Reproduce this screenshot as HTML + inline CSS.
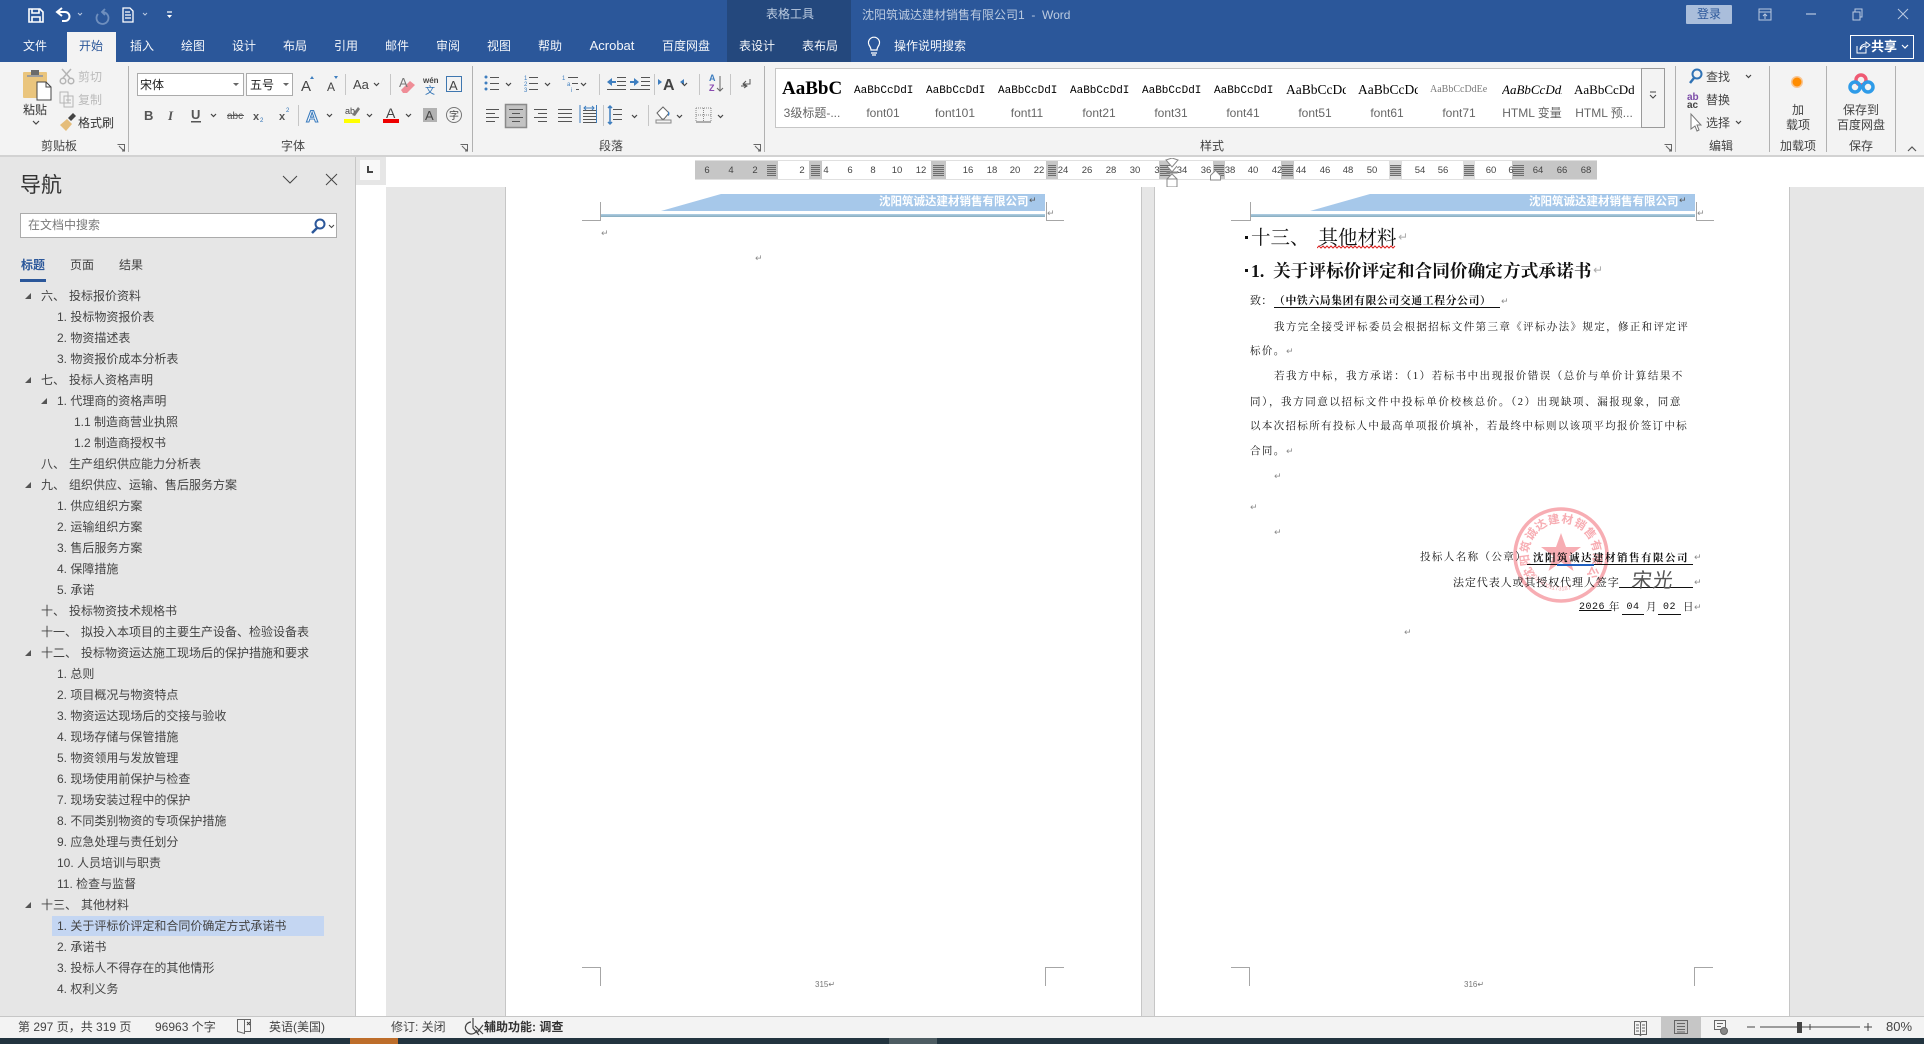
<!DOCTYPE html>
<html lang="zh"><head><meta charset="utf-8"><title>Word</title>
<style>
html,body{margin:0;padding:0;background:#fff}
body{width:1924px;height:1044px;position:relative;overflow:hidden;font:12px/12px "Liberation Sans","Noto Sans CJK SC",sans-serif;color:#444}
.a,.t,.c,.d,.m{position:absolute}
.t,.c,.d,.m{white-space:nowrap}
.c{transform:translateX(-50%)}
.tab{position:absolute;top:40px;color:#f4f6fa;transform:translateX(-50%);white-space:nowrap}
.g{position:absolute;top:140px;color:#444;transform:translateX(-50%);white-space:nowrap}
.sep{position:absolute;top:66px;height:86px;width:1px;background:#b1b1b1}
.bx{position:absolute;background:#fff;border:1px solid #ababab;box-sizing:border-box}
.st{position:absolute;top:81px;width:60px;height:20px;overflow:hidden;white-space:nowrap;color:#000;line-height:18px}
.sl{position:absolute;top:107px;color:#666;transform:translateX(-50%);white-space:nowrap}
.rb{position:absolute;top:161px;height:18px;background:#c6c6c6}
.hh{position:absolute;top:165px;height:11px;background:repeating-linear-gradient(0deg,#6d6d6d 0 1px,#bdbdbd 1px 2px)}
.rn{position:absolute;top:166px;font-size:9.5px;line-height:9px;color:#444;transform:translateX(-50%)}
#nav div{height:21px;line-height:21px;white-space:nowrap;color:#444;position:relative}
#nav .l1{padding-left:41px}
#nav .l2{padding-left:57px}
#nav .l3{padding-left:74px}
#nav .l1 b{font-weight:normal;display:inline-block;width:28px}
#nav .l1 b.w{width:40px}
#nav i{position:absolute;top:7px;width:0;height:0;border-bottom:6px solid #555;border-left:6px solid transparent}
.d{font-family:"Liberation Serif","Noto Serif CJK SC",serif;color:#111;font-size:10.5px;line-height:12px;letter-spacing:1.36px}
.m{font-family:"DejaVu Sans",sans-serif;font-size:9px;line-height:10px;color:#8a8a8a;letter-spacing:0}
.pg{position:absolute;top:187px;height:829px;background:#fff;border-left:1px solid #c6c6c6;border-right:1px solid #c6c6c6;box-sizing:content-box}
.hdt{position:absolute;top:196px;color:#fff;font-weight:bold;font-size:11.5px;line-height:12px;white-space:nowrap;font-family:"Liberation Serif","Noto Sans CJK SC",sans-serif}
.fn{position:absolute;top:980px;font-size:8px;line-height:9px;color:#777}
</style></head><body>

<!-- title bar -->
<div class="a" style="left:0;top:0;width:1924px;height:62px;background:#2b579a"></div>
<div class="a" style="left:727px;top:0;width:124px;height:62px;background:#24487d"></div>
<div class="a" style="left:67px;top:32px;width:49px;height:30px;background:#f3f3f3"></div>
<div class="tab" style="left:35px">文件</div>
<div class="tab" style="left:91px;color:#2b579a">开始</div>
<div class="tab" style="left:142px">插入</div>
<div class="tab" style="left:193px">绘图</div>
<div class="tab" style="left:244px">设计</div>
<div class="tab" style="left:295px">布局</div>
<div class="tab" style="left:346px">引用</div>
<div class="tab" style="left:397px">邮件</div>
<div class="tab" style="left:448px">审阅</div>
<div class="tab" style="left:499px">视图</div>
<div class="tab" style="left:550px">帮助</div>
<div class="tab" style="left:612px;font-size:13px">Acrobat</div>
<div class="tab" style="left:686px">百度网盘</div>
<div class="tab" style="left:757px">表设计</div>
<div class="tab" style="left:820px">表布局</div>
<div class="tab" style="left:930px">操作说明搜索</div>
<div class="c" style="left:790px;top:8px;color:#bccbe0">表格工具</div>
<div class="t" style="left:862px;top:9px;color:#bccbe0">沈阳筑诚达建材销售有限公司1 &nbsp;-&nbsp; Word</div>
<div class="a" style="left:1686px;top:5px;width:46px;height:19px;background:#aabedb;border-radius:1px;color:#2b579a;text-align:center;line-height:19px">登录</div>
<div class="a" style="left:1850px;top:35px;width:64px;height:24px;box-sizing:border-box;border:1px solid #fff;color:#fff;font-weight:bold;font-size:13px;line-height:22px;padding-left:20px">共享</div>

<!-- ribbon -->
<div class="a" style="left:0;top:62px;width:1924px;height:93px;background:#f3f3f3"></div>
<div class="a" style="left:0;top:155px;width:1924px;height:2px;background:#d2d2d2"></div>
<div class="sep" style="left:128px"></div><div class="sep" style="left:472px"></div><div class="sep" style="left:764px"></div><div class="sep" style="left:1675px"></div><div class="sep" style="left:1769px"></div><div class="sep" style="left:1826px"></div><div class="sep" style="left:1895px"></div>
<div class="c" style="left:35px;top:104px;color:#333">粘贴</div>
<div class="t" style="left:78px;top:71px;color:#bbb">剪切</div>
<div class="t" style="left:78px;top:94px;color:#bbb">复制</div>
<div class="t" style="left:78px;top:117px;color:#333">格式刷</div>
<div class="g" style="left:59px">剪贴板</div><div class="g" style="left:293px">字体</div><div class="g" style="left:611px">段落</div><div class="g" style="left:1212px">样式</div><div class="g" style="left:1721px">编辑</div><div class="g" style="left:1798px">加载项</div><div class="g" style="left:1861px">保存</div>
<div class="bx" style="left:137px;top:73px;width:107px;height:23px;color:#222;padding:5px 0 0 2px">宋体</div>
<div class="bx" style="left:246px;top:73px;width:47px;height:23px;color:#222;padding:5px 0 0 3px">五号</div>
<div class="t" style="left:1706px;top:71px">查找</div><div class="t" style="left:1706px;top:94px">替换</div><div class="t" style="left:1706px;top:117px">选择</div>
<div class="c" style="left:1798px;top:104px">加</div><div class="c" style="left:1798px;top:119px">载项</div>
<div class="c" style="left:1861px;top:104px">保存到</div><div class="c" style="left:1861px;top:119px">百度网盘</div>

<!-- style gallery -->
<div class="a" style="left:775px;top:68px;width:890px;height:60px;background:#fff;box-sizing:border-box;border:1px solid #c6c6c6"></div>
<div class="a" style="left:1641px;top:68px;width:24px;height:60px;box-sizing:border-box;border:1px solid #9a9a9a;background:#f3f3f3"></div>
<div class="st" style="left:782px;top:80px;font:bold 19px/18px 'Liberation Serif',serif">AaBbC</div>
<div class="st" style="left:854px;top:82px;font:11px/18px 'Liberation Mono',monospace">AaBbCcDdI</div>
<div class="st" style="left:926px;top:82px;font:11px/18px 'Liberation Mono',monospace">AaBbCcDdI</div>
<div class="st" style="left:998px;top:82px;font:11px/18px 'Liberation Mono',monospace">AaBbCcDdI</div>
<div class="st" style="left:1070px;top:82px;font:11px/18px 'Liberation Mono',monospace">AaBbCcDdI</div>
<div class="st" style="left:1142px;top:82px;font:11px/18px 'Liberation Mono',monospace">AaBbCcDdI</div>
<div class="st" style="left:1214px;top:82px;font:11px/18px 'Liberation Mono',monospace">AaBbCcDdI</div>
<div class="st" style="left:1286px;font:13.5px/18px 'Liberation Serif',serif">AaBbCcDdE</div>
<div class="st" style="left:1358px;font:13.5px/18px 'Liberation Serif',serif">AaBbCcDdE</div>
<div class="st" style="left:1430px;font:10px/18px 'Liberation Serif',serif;color:#7a7a7a">AaBbCcDdEe</div>
<div class="st" style="left:1502px;font:italic 13px/18px 'Liberation Serif',serif">AaBbCcDdE</div>
<div class="st" style="left:1574px;font:13px/18px 'Liberation Serif',serif">AaBbCcDdE</div>
<div class="sl" style="left:812px">3级标题-...</div><div class="sl" style="left:883px">font01</div><div class="sl" style="left:955px">font101</div><div class="sl" style="left:1027px">font11</div><div class="sl" style="left:1099px">font21</div><div class="sl" style="left:1171px">font31</div><div class="sl" style="left:1243px">font41</div><div class="sl" style="left:1315px">font51</div><div class="sl" style="left:1387px">font61</div><div class="sl" style="left:1459px">font71</div><div class="sl" style="left:1532px">HTML 变量</div><div class="sl" style="left:1604px">HTML 预...</div>

<!-- ribbon & title icons -->
<svg class="a" style="left:0;top:0" width="1924" height="156" font-family="Liberation Sans,sans-serif">
<g fill="none" stroke="#fff" stroke-width="1.6">
 <path d="M29 9h11l3 3v10h-14z"/><path d="M32 9v4h7V9M32 22v-5h8v5"/>
 <path d="M62 8l-5 4 5 4M57 12h8a4.500 4.500 0 0 1 0 9h-3" stroke-width="2"/>
 <path d="M123 8h7l3 3v11h-10zM125 12h5M125 15h6M125 18h6" stroke-width="1.3"/>
 <path d="M167 12h5" stroke-width="1.200"/>
 <path d="M78 13l2 2 2-2M143 13l2 2 2-2" stroke="#b9c8e0" stroke-width="1"/>
</g>
<path d="M167 15h5l-2.500 3z" fill="#fff"/>
<path d="M105 9l-3 3 3 3M102 12a6 6 0 1 1-4 2" fill="none" stroke="#6f8fbe" stroke-width="1.800"/>
<!-- bulb -->
<path transform="translate(0,7)" d="M869 38a5.500 5.500 0 1 1 10 0c-1 1.500-2 3-2 5h-6c0-2-1-3.500-2-5zM871 46h6M872 48h4" fill="none" stroke="#fff" stroke-width="1.200"/>
<!-- window buttons -->
<g fill="none" stroke="#b9c8e0" stroke-width="1">
 <path d="M1759 9h12v11h-12zM1759 12h12M1765 19v-5M1763 16l2-2 2 2"/>
 <path d="M1806 14h10" stroke="#d5dfee"/>
 <path d="M1853 12h7v8h-7zM1855 12V9h7v8h-2"/>
 <path d="M1898 9l10 10M1908 9l-10 10"/>
 <path d="M1857 46v7h9v-4M1860 50c0-3 2-6 6-6v-2l4 3-4 3v-2c-3 0-5 2-6 4z" stroke="#fff"/>
 <path d="M1902 45l3 3 3-3" stroke="#fff" stroke-width="1.200"/>
</g>
<!-- clipboard -->
<rect x="23" y="72" width="24" height="26" fill="#eac57d" rx="1"/><rect x="31" y="70" width="8" height="5" fill="#6b6b6b"/><rect x="27" y="75" width="16" height="2" fill="#9d9d9d"/>
<path d="M37 82h9l5 5v13H37z" fill="#fff" stroke="#444"/><path d="M46 82v5h5" fill="none" stroke="#444"/>
<path d="M33 121l3 3 3-3" fill="none" stroke="#444" stroke-width="1.200"/>
<g fill="none" stroke="#b5b5b5" stroke-width="1.500"><path d="M62 69l8 9M71 69l-8 9"/><circle cx="63" cy="81" r="2.800"/><circle cx="71" cy="81" r="2.800"/><path d="M60 92h8v11h-8zM64 96h9v11h-9zM66 100h5M66 103h5" stroke-width="1"/></g>
<path d="M60 125l7-6 5 5-6 7z" fill="#e5bd7a"/><path d="M68 118l5-5 3 3-5 5z" fill="#444"/>
<!-- combos -->
<path d="M233 83h6l-3 3zM283 83h6l-3 3" fill="#666"/>
<!-- font row1 -->
<g fill="#444" font-size="15"><text x="301" y="91">A</text><text x="327" y="91" font-size="12">A</text><text x="353" y="89" font-size="13">Aa</text></g>
<path d="M310 79l2-3 2 3zM334 76h4l-2 3z" fill="#3e7ebf"/>
<path d="M374 83l2.500 2.500 2.500-2.500" fill="none" stroke="#444" stroke-width="1.200"/>
<rect x="345" y="74" width="1" height="21" fill="#c6c6c6"/><rect x="390" y="74" width="1" height="21" fill="#c6c6c6"/>
<path d="M401 90l9-9 5 4-8 8h-4z" fill="#ef8d97"/><text x="399" y="87" font-size="13" fill="#777">A</text>
<text x="423" y="83" font-size="8" fill="#444" font-weight="bold">wén</text><text x="425" y="94" font-size="10" fill="#2f72b5" font-family="Noto Sans CJK SC">文</text>
<rect x="446.500" y="76.500" width="15" height="15" fill="none" stroke="#3f77b0"/><text x="449" y="90" font-size="13" fill="#444">A</text>
<!-- font row 2 -->
<g fill="#555" font-size="13" font-weight="bold"><text x="144" y="120">B</text><text x="168" y="120" font-style="italic" font-family="Liberation Serif">I</text><text x="191" y="119">U</text><rect x="191" y="121" width="10" height="1.500"/><text x="227" y="119" font-size="10" font-weight="normal">abc</text><rect x="227" y="115" width="17" height="1"/><text x="253" y="120" font-size="11">x</text><text x="279" y="120" font-size="11">x</text></g>
<text x="260" y="122" font-size="6" fill="#2f72b5">2</text><text x="286" y="112" font-size="6" fill="#2f72b5">2</text>
<path d="M211 114l2.500 2.500 2.500-2.500M327 114l2.500 2.500 2.500-2.500M367 114l2.500 2.500 2.500-2.500M406 114l2.500 2.500 2.500-2.500" fill="none" stroke="#444" stroke-width="1.200"/>
<rect x="298" y="105" width="1" height="21" fill="#c6c6c6"/>
<text x="306" y="122" font-size="17" fill="#fff" stroke="#3e7ebf" stroke-width="1.100" font-weight="bold">A</text>
<text x="345" y="114" font-size="9" fill="#444">ab</text><path d="M352 115l6-8 2 2-5 7z" fill="#777"/><rect x="344" y="119" width="16" height="4" fill="#ff0"/>
<text x="386" y="118" font-size="14" fill="#444">A</text><rect x="383" y="119" width="16" height="4" fill="#e00"/>
<rect x="423" y="108" width="14" height="14" fill="#b2b2b2"/><text x="425" y="120" font-size="13" fill="#444">A</text>
<circle cx="454" cy="115" r="7.500" fill="none" stroke="#777"/><text x="449" y="119" font-size="10" fill="#444" font-family="Noto Sans CJK SC">字</text>
<!-- paragraph -->
<g fill="#3e7ebf"><circle cx="486" cy="77" r="1.500"/><circle cx="486" cy="83" r="1.500"/><circle cx="486" cy="89" r="1.500"/>
<text x="524" y="80" font-size="6">1</text><text x="524" y="86" font-size="6">2</text><text x="524" y="92" font-size="6">3</text>
<text x="562" y="80" font-size="6">1</text><text x="567" y="86" font-size="6">a</text><text x="571" y="92" font-size="6">i</text>
<path d="M607 82l5-4v3h4v2h-4v3zM630 81h4v-3l5 4-5 4v-3h-4z"/>
<path d="M662 82l-4-3v6zM680 82l4-3v6z"/></g>
<g fill="none" stroke="#555" stroke-width="1"><path d="M490 77.500h9M490 83.500h9M490 89.500h9M529 77.500h9M529 83.500h9M529 89.500h9M568 77.500h10M572 83.500h6M576 89.500h3"/>
<path d="M617 77.500h9M617 81.500h9M617 85.500h9M607 89.500h19M641 77.500h9M641 81.500h9M641 85.500h9M630 89.500h20"/>
<path d="M486 109.500h13M486 113.500h9M486 117.500h13M486 121.500h9M534 109.500h13M538 113.500h9M534 117.500h13M538 121.500h9M558 109.500h14M558 113.500h14M558 117.500h14M558 121.500h14M583 110.500h14M583 113.500h14M583 116.500h14M583 119.500h14M583 122.500h14M613 109.500h9M613 114.500h9M613 119.500h9"/></g>
<path d="M580 105v18M596.500 105v18M584 108h10M586 106l-2 2 2 2M592 106l2 2-2 2" fill="none" stroke="#3e7ebf"/>
<path d="M610 106v18M608 108l2-2 2 2M608 122l2 2 2-2" fill="none" stroke="#3e7ebf" stroke-width="1.500"/>
<rect x="505.500" y="104.500" width="21" height="23" fill="#c3c3c3" stroke="#8a8a8a" stroke-width="1.500"/>
<path d="M509 109.500h14M512 113.500h8M509 117.500h14M512 121.500h8" stroke="#555" fill="none"/>
<path d="M506 83l2.500 2.500 2.500-2.500M545 83l2.500 2.500 2.500-2.500M581 83l2.500 2.500 2.500-2.500M682 83l2.500 2.500 2.500-2.500M632 115l2.500 2.500 2.500-2.500M677 115l2.500 2.500 2.500-2.500M718 115l2.500 2.500 2.500-2.500" fill="none" stroke="#444" stroke-width="1.200"/>
<text x="663" y="90" font-size="16" fill="#444" font-weight="bold">A</text>
<text x="709" y="81" font-size="9" fill="#3e7ebf" font-weight="bold">A</text><text x="709" y="91" font-size="9" fill="#8a4bb0" font-weight="bold">Z</text>
<path d="M720 76v15M717 88l3 3 3-3" fill="none" stroke="#666"/>
<path d="M750 79v5h-7M746 81l-3 3 3 3M741 86h6M744 84l3 2-3 2" fill="none" stroke="#555"/>
<g fill="#c6c6c6"><rect x="599" y="74" width="1" height="21"/><rect x="654" y="74" width="1" height="21"/><rect x="699" y="74" width="1" height="21"/><rect x="730" y="74" width="1" height="21"/><rect x="603" y="105" width="1" height="21"/><rect x="648" y="105" width="1" height="21"/></g>
<path d="M657 113l6-6 6 6-5 6h-2z" fill="#fff" stroke="#666"/><path d="M668 111c2 2 2 4 0 5z" fill="#3e7ebf"/><rect x="656" y="120" width="15" height="3" fill="#f3f3f3" stroke="#888"/>
<path d="M696 108h15M696 115h15M703.500 108v14M696 108v14M711 108v14" fill="none" stroke="#888" stroke-dasharray="1 1"/><path d="M696 122h15" stroke="#666"/>
<!-- launchers -->
<g fill="none" stroke="#666"><path d="M117.500 144.500h7v7M119 146l5 5M122 151h2v-2M460.500 144.500h7v7M462 146l5 5M465 151h2v-2M753.500 144.500h7v7M755 146l5 5M758 151h2v-2M1664.500 144.500h7v7M1666 146l5 5M1669 151h2v-2"/>
<path d="M1650 95l3 3 3-3M1650 92h6" stroke="#444"/>
<path d="M1908 151l4-4 4 4" stroke="#555" stroke-width="1.200"/></g>
<!-- edit -->
<circle cx="1697" cy="74" r="4.500" fill="none" stroke="#2f72b5" stroke-width="2"/><path d="M1694 78l-4 5" stroke="#2f72b5" stroke-width="2.500"/>
<path d="M1746 75l2.500 2.500 2.500-2.500M1736 121l2.500 2.500 2.500-2.500" fill="none" stroke="#444" stroke-width="1.200"/>
<text x="1687" y="100" font-size="10" fill="#7b4ba8" font-weight="bold">ab</text><text x="1687" y="108" font-size="10" fill="#444" font-weight="bold">ac</text>
<path d="M1691 114v15l4-3 2 5 2-1-2-5h4z" fill="#fff" stroke="#777"/>
<!-- addin -->
<circle cx="1797" cy="82" r="6" fill="#ff7f00" opacity=".4"/><circle cx="1797" cy="82" r="4.500" fill="#ff8c00"/>
<circle cx="1861" cy="80" r="5" fill="none" stroke="#ef5a73" stroke-width="3.500"/><circle cx="1855" cy="87" r="5" fill="none" stroke="#2e9be8" stroke-width="3.500"/><circle cx="1868" cy="87" r="5" fill="none" stroke="#2e9be8" stroke-width="3.500"/>
</svg>

<!-- ruler strip / doc -->
<div class="a" style="left:356px;top:157px;width:30px;height:28px;background:#e6e6e6"></div>
<div class="a" style="left:360px;top:160px;width:20px;height:20px;background:#f8f8f8"></div>
<div class="a" style="left:367px;top:166px;width:2px;height:7px;background:#444"></div><div class="a" style="left:367px;top:171px;width:6px;height:2px;background:#444"></div>
<div class="a" style="left:695px;top:160px;width:902px;height:20px;box-sizing:border-box;border:1px solid #e0e0e0;background:#fff"></div>
<div class="rb" style="left:695px;width:83px"></div><div class="rb" style="left:809px;width:13px"></div><div class="rb" style="left:931px;width:15px"></div><div class="rb" style="left:1046px;width:12px"></div><div class="rb" style="left:1159px;width:12px"></div><div class="rb" style="left:1213px;width:12px"></div><div class="rb" style="left:1281px;width:13px"></div><div class="rb" style="left:1389px;width:13px;background:#ddd"></div><div class="rb" style="left:1463px;width:12px;background:#ddd"></div><div class="rb" style="left:1512px;width:85px"></div>
<div class="hh" style="left:767px;width:9px"></div><div class="hh" style="left:811px;width:9px"></div><div class="hh" style="left:933px;width:11px"></div><div class="hh" style="left:1048px;width:8px"></div><div class="hh" style="left:1160px;width:10px"></div><div class="hh" style="left:1214px;width:10px"></div><div class="hh" style="left:1282px;width:11px"></div><div class="hh" style="left:1390px;width:11px"></div><div class="hh" style="left:1464px;width:10px"></div><div class="hh" style="left:1513px;width:11px"></div>
<div class="rn" style="left:707px">6</div><div class="rn" style="left:731px">4</div><div class="rn" style="left:755px">2</div><div class="rn" style="left:802px">2</div><div class="rn" style="left:826px">4</div><div class="rn" style="left:850px">6</div><div class="rn" style="left:873px">8</div><div class="rn" style="left:897px">10</div><div class="rn" style="left:921px">12</div><div class="rn" style="left:968px">16</div><div class="rn" style="left:992px">18</div><div class="rn" style="left:1015px">20</div><div class="rn" style="left:1039px">22</div><div class="rn" style="left:1063px">24</div><div class="rn" style="left:1087px">26</div><div class="rn" style="left:1111px">28</div><div class="rn" style="left:1135px">30</div><div class="rn" style="left:1157px">3</div><div class="rn" style="left:1182px">34</div><div class="rn" style="left:1206px">36</div><div class="rn" style="left:1230px">38</div><div class="rn" style="left:1253px">40</div><div class="rn" style="left:1277px">42</div><div class="rn" style="left:1301px">44</div><div class="rn" style="left:1325px">46</div><div class="rn" style="left:1348px">48</div><div class="rn" style="left:1372px">50</div><div class="rn" style="left:1420px">54</div><div class="rn" style="left:1443px">56</div><div class="rn" style="left:1491px">60</div><div class="rn" style="left:1511px">6</div><div class="rn" style="left:1538px">64</div><div class="rn" style="left:1562px">66</div><div class="rn" style="left:1586px">68</div>
<svg class="a" style="left:1160px;top:158px" width="70" height="30"><path d="M6 2l6-2 6 2-6 7zM7 8l5 6 5-6M7 15h10v-1H7zM7 21h10v8H7zM7 21l5-5 5 5" fill="#fff" stroke="#888"/><path d="M50.500 17.500l5-5 5 5v4.500h-10z" fill="#fff" stroke="#888"/></svg>

<div class="a" style="left:386px;top:187px;width:1538px;height:829px;background:#e6e6e6"></div>
<div class="pg" style="left:505px;width:635px"></div>
<div class="pg" style="left:1154px;width:634px"></div>

<!-- page 1 -->
<svg class="a" style="left:500px;top:187px" width="1300" height="829">
 <g fill="#a6c8ea"><path d="M161 24L221 7H545V24z"/><path d="M810 24L870 7H1195V24z"/></g>
 <g><rect x="101" y="27" width="444" height="1.500" fill="#a9c9de"/><rect x="101" y="28.500" width="444" height="1.500" fill="#8db1c4"/><rect x="751" y="27" width="444" height="1.500" fill="#a9c9de"/><rect x="751" y="28.500" width="444" height="1.500" fill="#8db1c4"/></g>
 <g fill="none" stroke="#a6a6a6"><path d="M82 33.500h18.500V15M546.500 15v18.500H564M731 33.500h19.500V15M1196.500 15v18.500H1214"/>
 <path d="M82 780.500h18.500V799M564 780.500h-18.500V799M731 780.500h18.500V799M1213 780.500h-18.500V799"/></g>
</svg>
<div class="hdt" style="left:879px;width:149px">沈阳筑诚达建材销售有限公司</div>
<div class="hdt" style="left:1529px;width:150px">沈阳筑诚达建材销售有限公司</div>
<div class="m" style="left:1029px;top:196px;color:#555">↵</div><div class="m" style="left:1679px;top:196px;color:#555">↵</div>
<div class="m" style="left:1047px;top:209px">↵</div><div class="m" style="left:1697px;top:209px">↵</div>
<div class="m" style="left:601px;top:229px">↵</div><div class="m" style="left:755px;top:254px">↵</div>
<div class="fn" style="left:815px">315<span style="font-family:'DejaVu Sans'">↵</span></div>
<div class="fn" style="left:1464px">316<span style="font-family:'DejaVu Sans'">↵</span></div>

<!-- page 2 body -->
<svg class="a" style="left:1500px;top:494px" width="124" height="124"><g transform="translate(61,61)" fill="#f5929a" opacity=".75">
 <circle r="46" fill="none" stroke="#f5929a" stroke-width="3.500"/>
 <path d="M0-21L5-7H20L8 2l4.500 15L0 8l-12.500 9L-8 2l-12-9H-5z" transform="translate(0,-1)"/>
 <path id="arc" d="M-25 21A32.500 32.500 0 1 1 25 21" fill="none"/>
 <text font-family="Noto Sans CJK SC,sans-serif" font-size="11.500" font-weight="bold"><textPath href="#arc" textLength="158" lengthAdjust="spacing">沈阳筑诚达建材销售有限公司</textPath></text>
 <path id="arc2" d="M-32 16A36 36 0 0 0 32 16" fill="none"/>
 <text font-family="Liberation Sans,sans-serif" font-size="6"><textPath href="#arc2">210104001173187</textPath></text>
</g></svg>
<div class="t" style="left:1251px;top:228px;font:19.5px/22px 'Liberation Serif','Noto Serif CJK SC',serif;color:#111">十三、<span style="position:absolute;left:67.500px;top:0">其他材料</span></div>
<svg class="a" style="left:1317px;top:245px" width="82" height="5"><path d="M0 3l2-2 2 2 2-2 2 2 2-2 2 2 2-2 2 2 2-2 2 2 2-2 2 2 2-2 2 2 2-2 2 2 2-2 2 2 2-2 2 2 2-2 2 2 2-2 2 2 2-2 2 2 2-2 2 2 2-2 2 2 2-2 2 2 2-2 2 2 2-2 2 2 2-2 2 2 2-2" fill="none" stroke="#d22"/></svg>
<div class="a" style="left:1245px;top:236px;width:3px;height:3px;background:#111"></div>
<div class="a" style="left:1245px;top:269px;width:3px;height:3px;background:#111"></div>
<div class="m" style="left:1398px;top:232px;font-size:12px;color:#aaa">↵</div>
<div class="t" style="left:1251px;top:260px;font:bold 17.700px/22px 'Liberation Serif','Noto Serif CJK SC',serif;color:#111">1.<span style="position:absolute;left:22px;top:0;font-family:'Noto Serif CJK SC',serif">关于评标价评定和合同价确定方式承诺书</span></div>
<div class="m" style="left:1593px;top:265px;font-size:12px;color:#aaa">↵</div>
<div class="d" style="left:1250px;top:295px;font-size:11px;letter-spacing:.3px">致：</div>
<div class="d" style="left:1274px;top:295px;font-weight:bold;font-size:10.8px;letter-spacing:.65px;border-bottom:1px solid #111;width:226px;font-family:'Noto Serif CJK SC',serif;height:12px;line-height:11px">（中铁六局集团有限公司交通工程分公司）</div>
<div class="m" style="left:1501px;top:297px">↵</div>
<div class="d" style="left:1274px;top:322px">我方完全接受评标委员会根据招标文件第三章《评标办法》规定，修正和评定评</div>
<div class="d" style="left:1250px;top:346px">标价。</div><div class="m" style="left:1286px;top:347px">↵</div>
<div class="d" style="left:1274px;top:371px;letter-spacing:1.51px">若我方中标，我方承诺：（1）若标书中出现报价错误（总价与单价计算结果不</div>
<div class="d" style="left:1250px;top:397px;letter-spacing:1.6px">同），我方同意以招标文件中投标单价校核总价。（2）出现缺项、漏报现象，同意</div>
<div class="d" style="left:1250px;top:421px;letter-spacing:1.34px">以本次招标所有投标人中最高单项报价填补，若最终中标则以该项平均报价签订中标</div>
<div class="d" style="left:1250px;top:446px">合同。</div><div class="m" style="left:1286px;top:447px">↵</div>
<div class="m" style="left:1274px;top:472px">↵</div><div class="m" style="left:1250px;top:503px">↵</div><div class="m" style="left:1274px;top:528px">↵</div>
<div class="d" style="left:1420px;top:552px;letter-spacing:1.4px">投标人名称（公章）</div>
<div class="d" style="left:1527px;top:552px;width:166px;height:12px;border-bottom:1px solid #111;font-weight:bold;letter-spacing:1.5px;text-indent:6px;font-family:'Noto Serif CJK SC',serif">沈阳筑诚达建材销售有限公司</div>
<div class="a" style="left:1557px;top:564px;width:37px;height:1.500px;background:#1f5fbf"></div>
<div class="m" style="left:1694px;top:553px">↵</div>
<div class="d" style="left:1453px;top:577px;letter-spacing:.9px;font-size:11px">法定代表人或其授权代理人签字</div>
<div class="a" style="left:1619px;top:587px;width:74px;height:1px;background:#111"></div>
<div class="t" style="left:1632px;top:566px;font:20px/26px 'WenQuanYi Zen Hei','Noto Sans CJK SC',sans-serif;letter-spacing:1px;color:#555;transform:skewX(-8deg)">宋光</div>
<div class="m" style="left:1694px;top:578px">↵</div>
<div class="d" style="left:1579px;top:602px;letter-spacing:.5px;font-family:'Liberation Mono','Noto Serif CJK SC',monospace;font-size:10px;height:12px"><span style="text-decoration:underline">2026&nbsp;</span></div>
<div class="d" style="left:1609px;top:602px">年</div>
<div class="d" style="left:1622px;top:602px;width:22px;height:12px;border-bottom:1px solid #111;font-family:'Liberation Mono',monospace;letter-spacing:.5px;font-size:10px;text-align:center">04</div>
<div class="d" style="left:1646px;top:602px">月</div>
<div class="d" style="left:1658px;top:602px;width:23px;height:12px;border-bottom:1px solid #111;font-family:'Liberation Mono',monospace;letter-spacing:.5px;font-size:10px;text-align:center">02</div>
<div class="d" style="left:1683px;top:602px">日</div>
<div class="m" style="left:1694px;top:603px">↵</div>
<div class="m" style="left:1404px;top:628px">↵</div>

<!-- nav pane -->
<div class="a" style="left:0;top:157px;width:355px;height:859px;background:#e6e6e6;border-right:1px solid #c6c6c6"></div>
<div class="t" style="left:20px;top:175px;font-size:21px;line-height:22px;color:#333">导航</div>
<svg class="a" style="left:280px;top:172px" width="60" height="16"><path d="M3 4l7 7 7-7M46 2l11 11M57 2L46 13" fill="none" stroke="#444"/></svg>
<div class="bx" style="left:20px;top:213px;width:317px;height:25px;color:#7a7a7a;padding:5px 0 0 7px">在文档中搜索</div>
<svg class="a" style="left:308px;top:217px" width="28" height="18"><circle cx="12" cy="7" r="4.500" fill="none" stroke="#2b579a" stroke-width="2"/><path d="M9 11l-5 5" stroke="#2b579a" stroke-width="2.500"/><path d="M21 8l2.500 2.500 2.500-2.500" fill="none" stroke="#444"/></svg>
<div class="t" style="left:21px;top:259px;color:#2b579a;font-weight:bold">标题</div><div class="t" style="left:70px;top:259px">页面</div><div class="t" style="left:119px;top:259px">结果</div>
<div class="a" style="left:20px;top:279px;width:26px;height:3px;background:#2b579a"></div>
<div class="a" style="left:52px;top:916px;width:272px;height:20px;background:#c4d6f2"></div>
<div id="nav" class="a" style="left:0;top:286px;width:355px">
<div class="l1"><i style="left:25px"></i><b>六、</b>投标报价资料</div>
<div class="l2">1. 投标物资报价表</div>
<div class="l2">2. 物资描述表</div>
<div class="l2">3. 物资报价成本分析表</div>
<div class="l1"><i style="left:25px"></i><b>七、</b>投标人资格声明</div>
<div class="l2"><i style="left:41px"></i>1. 代理商的资格声明</div>
<div class="l3">1.1 制造商营业执照</div>
<div class="l3">1.2 制造商授权书</div>
<div class="l1"><b>八、</b>生产组织供应能力分析表</div>
<div class="l1"><i style="left:25px"></i><b>九、</b>组织供应、运输、售后服务方案</div>
<div class="l2">1. 供应组织方案</div>
<div class="l2">2. 运输组织方案</div>
<div class="l2">3. 售后服务方案</div>
<div class="l2">4. 保障措施</div>
<div class="l2">5. 承诺</div>
<div class="l1"><b>十、</b>投标物资技术规格书</div>
<div class="l1"><b class="w">十一、</b>拟投入本项目的主要生产设备、检验设备表</div>
<div class="l1"><i style="left:25px"></i><b class="w">十二、</b>投标物资运达施工现场后的保护措施和要求</div>
<div class="l2">1. 总则</div>
<div class="l2">2. 项目概况与物资特点</div>
<div class="l2">3. 物资运达现场后的交接与验收</div>
<div class="l2">4. 现场存储与保管措施</div>
<div class="l2">5. 物资领用与发放管理</div>
<div class="l2">6. 现场使用前保护与检查</div>
<div class="l2">7. 现场安装过程中的保护</div>
<div class="l2">8. 不同类别物资的专项保护措施</div>
<div class="l2">9. 应急处理与责任划分</div>
<div class="l2">10. 人员培训与职责</div>
<div class="l2">11. 检查与监督</div>
<div class="l1"><i style="left:25px"></i><b class="w">十三、</b>其他材料</div>
<div class="l2">1. 关于评标价评定和合同价确定方式承诺书</div>
<div class="l2">2. 承诺书</div>
<div class="l2">3. 投标人不得存在的其他情形</div>
<div class="l2">4. 权利义务</div>
</div>

<!-- status bar -->
<div class="a" style="left:0;top:1016px;width:1924px;height:22px;background:#f3f3f3;border-top:1px solid #c6c6c6;box-sizing:border-box"></div>
<div class="a" style="left:1661px;top:1017px;width:40px;height:21px;background:#c6c6c6"></div>
<div class="t" style="left:18px;top:1021px">第 297 页，共 319 页</div>
<div class="t" style="left:155px;top:1021px">96963 个字</div>
<div class="t" style="left:269px;top:1021px">英语(美国)</div>
<div class="t" style="left:391px;top:1021px">修订: 关闭</div>
<div class="t" style="left:484px;top:1021px;font-weight:bold;color:#333">辅助功能: 调查</div>
<div class="t" style="left:1886px;top:1021px;font-size:13px">80%</div>
<svg class="a" style="left:0;top:1016px" width="1924" height="22" fill="none" stroke="#666">
 <path d="M237.500 3.500h7v14l-7-2zM244.500 3.500h6v12h-6"/><path d="M247 6l3 3M250 6l-3 3" stroke="#444"/>
 <path d="M471 6a6 6 0 1 0 6 8M473 2v10l6 7M483 9l-6 8M475 10l8 8" stroke="#444" stroke-width="1.200"/>
 <path d="M1634.500 5.500h5l1 1 1-1h5v13h-5l-1 1-1-1h-5zM1640.500 6.500v13M1636 9h3M1636 12h3M1636 15h3M1642 9h3M1642 12h3M1642 15h3"/>
 <path d="M1674.500 4.500h13v13h-13zM1677 7.500h8M1677 10.500h8M1677 13.500h8M1677 16h8"/>
 <path d="M1714.500 4.500h11v9h-11zM1717 7.500h6M1717 10.500h4"/><circle cx="1724" cy="15" r="3.500" fill="#888"/>
 <path d="M1747 11h8M1864 11h8M1868 7v8M1760 11h100M1810 8v6" stroke="#444"/>
 <rect x="1797" y="6" width="5" height="11" fill="#444" stroke="none"/>
</svg>

<!-- taskbar -->
<div class="a" style="left:0;top:1038px;width:1924px;height:6px;background:#22343f"></div>
<div class="a" style="left:350px;top:1038px;width:48px;height:6px;background:#bd6d2a"></div>
<div class="a" style="left:889px;top:1038px;width:48px;height:6px;background:#4d5c62"></div>
</body></html>
